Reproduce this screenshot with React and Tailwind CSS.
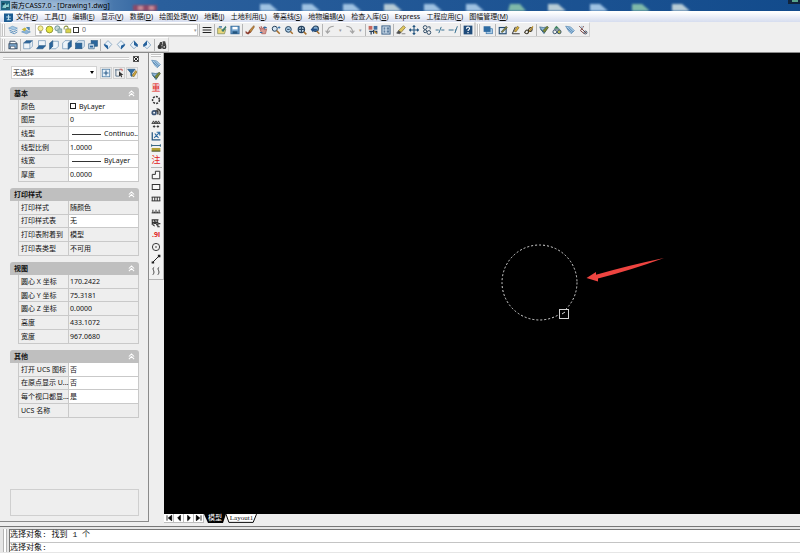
import React from "react";

const B = "#2f6ca3";
const D = "#26435f";

const ICONS = {
  layers: (
    <>
      <path d="M1 5l6-3 8 3-5 3z" fill="#a9cbe6" stroke="#5b8fbd" />
      <path d="M2 8l7 3 6-3M3 11l7 3 5-3" fill="none" stroke="#5b8fbd" strokeWidth="1.5" />
    </>
  ),
  layersPrev: (
    <>
      <path d="M1 11l6-3 8 3-6 3z" fill="#8fb6d8" stroke="#5b8fbd" />
      <path d="M1 7l5-3 3 2-3 4z" fill="#c9b93a" />
      <path d="M8 3h6v6l-3-2z" fill="#4f86b5" />
    </>
  ),
  lines: <path d="M1 4h14M1 8h14M1 12h14" stroke="#222" strokeWidth="1.7" />,
  folder: (
    <>
      <path d="M1 5h5l1 2h7l-2 7H1z" fill="#e9d77c" stroke="#6b7a4a" />
      <path d="M7 9l7-8 1 3-5 7z" fill="#3d7d6e" />
      <path d="M3 3h5" stroke={B} strokeWidth="2" />
    </>
  ),
  save: (
    <>
      <rect x="1.5" y="2" width="13" height="12" fill="#6fa0cc" stroke="#336a9d" strokeWidth="1.5" />
      <rect x="4" y="3" width="8" height="4" fill="#fff" />
      <rect x="4" y="10" width="8" height="4" fill="#24557f" />
    </>
  ),
  brush: (
    <>
      <path d="M6 10L14 1l1 2-6 9z" fill="#c58a3c" stroke="#7d4d20" />
      <path d="M1 9l3 3 4-3 1 3-4 3-4-2z" fill="#8c3d2f" />
    </>
  ),
  hand: (
    <>
      <path d="M2 3l3 4V2l3 5 1-4 2 5 3-2-2 8H6z" fill="#d79b93" stroke="#a34b45" />
      <path d="M11 2v5M9 4h5M3 12h4" stroke={B} strokeWidth="1.6" />
    </>
  ),
  zoomRt: (
    <>
      <circle cx="6" cy="6" r="4" fill="#d5e6f3" stroke={D} strokeWidth="1.6" />
      <path d="M9 9l5 5" stroke="#a8702d" strokeWidth="2.4" />
      <path d="M11 4h4M13 2v4" stroke={B} strokeWidth="1.4" />
    </>
  ),
  zoomWin: (
    <>
      <circle cx="7" cy="7" r="4.6" fill="#a9cbe6" stroke={D} strokeWidth="1.6" />
      <path d="M10 10l4 4" stroke="#a8702d" strokeWidth="2.4" />
      <path d="M5 7h4" stroke={D} strokeWidth="1.6" />
    </>
  ),
  zoomExt: (
    <>
      <circle cx="7" cy="7" r="5" fill="#c7dced" stroke={D} strokeWidth="2" />
      <path d="M7 3v8M3 7h8" stroke={D} strokeWidth="1.8" />
      <path d="M11 11l4 4" stroke="#a8702d" strokeWidth="2.4" />
    </>
  ),
  zoomPrev: (
    <>
      <circle cx="9" cy="6" r="4.4" fill="#7ea9cf" stroke={D} strokeWidth="1.8" />
      <path d="M1 7l4-4v3h6v3H5v3z" fill="#224e86" />
      <path d="M11 10l4 4" stroke="#a8702d" strokeWidth="2.4" />
    </>
  ),
  undo: <path d="M14 2C7 2 4 6 4 12M1 9l3 4 4-4" fill="none" stroke="#a4a4a4" strokeWidth="1.8" />,
  redo: <path d="M2 2c7 0 10 4 10 10M8 9l4 4 3-4" fill="none" stroke="#a4a4a4" strokeWidth="1.8" />,
  props: (
    <>
      <rect x="1" y="1.5" width="6" height="6" fill="#c6675e" />
      <rect x="9" y="1.5" width="6" height="6" fill="#3f6e9e" />
      <path d="M2 10h12v4M5 10v5M9 8v6" stroke="#27405c" strokeWidth="2" fill="none" />
      <path d="M10 10l4 4" stroke="#ca8e2a" strokeWidth="2" />
    </>
  ),
  palette: (
    <>
      <rect x="1.5" y="1.5" width="13" height="13" fill="#dce9f4" stroke="#365c83" strokeWidth="1.6" />
      <path d="M4 5h3M9 5h4M4 8h3M9 8h4M4 11h3M9 11h4" stroke="#365c83" strokeWidth="1.8" />
    </>
  ),
  erase: (
    <>
      <path d="M4 9l8-8 3 3-7 8z" fill="#dec65f" stroke="#75622a" />
      <path d="M1 13l3-4 4 3-2 2zM9 14h6" fill="#4c4c4c" stroke="#4c4c4c" />
    </>
  ),
  move: (
    <path
      d="M8 1v14M1 8h14M6 3l2-2 2 2M6 13l2 2 2-2M3 6L1 8l2 2M13 6l2 2-2 2"
      fill="none"
      stroke="#24557f"
      strokeWidth="1.7"
    />
  ),
  copy: (
    <>
      <circle cx="5" cy="4" r="3" fill="none" stroke={D} strokeWidth="1.5" />
      <circle cx="5" cy="10" r="2.4" fill="none" stroke={D} strokeWidth="1.5" />
      <circle cx="11" cy="12" r="3" fill="none" stroke={D} strokeWidth="1.5" />
      <path d="M9 3h4v4" fill="none" stroke={D} strokeWidth="1.4" />
    </>
  ),
  trim: <path d="M1 8h5M10 8h5M6 13l4-10" stroke="#3a7393" strokeWidth="1.6" />,
  extend: <path d="M1 8h8M11 8h2M11 13l4-11" stroke="#3a7393" strokeWidth="1.6" />,
  help: (
    <>
      <rect x="1" y="1" width="14" height="14" fill="#1f4b7a" />
      <path d="M5.5 6c0-3.500 5-3.500 5-.5 0 2-2.500 2-2.500 4M8 11v2" fill="none" stroke="#fff" strokeWidth="1.8" />
    </>
  ),
  order: (
    <>
      <rect x="5" y="6" width="10" height="8" fill="#a9cbe6" stroke="#2f6ca3" />
      <rect x="1" y="2" width="11" height="9" fill="#2f6ca3" />
    </>
  ),
  boxPen: (
    <>
      <rect x="2" y="4" width="11" height="10" fill="#dce9f4" stroke="#234b70" strokeWidth="1.8" />
      <path d="M5 11l8-9 2 2-8 8z" fill="#8a8440" stroke="#353d2a" strokeWidth=".8" />
    </>
  ),
  anglePen: (
    <>
      <path d="M7 3L2 14h12" fill="none" stroke="#333" strokeWidth="1.6" />
      <path d="M5 10l5-8 3 2-5 7z" fill="#d7ae37" stroke="#75622a" />
    </>
  ),
  chainPen: (
    <>
      <path d="M1 12c2-5 5-5 6-2s-3 6-6 2zM7 8c2-5 6-5 6-1s-5 4-6 1z" fill="none" stroke="#3b3524" strokeWidth="1.8" />
      <path d="M8 9l6-8 1 2-6 8z" fill="#b98d2a" />
    </>
  ),
  layerPen: (
    <>
      <path d="M1 3l6 1 7-1-6 11z" fill="#8fb6d8" stroke="#2d5f7d" />
      <path d="M6 9l7-7 2 2-6 8z" fill="#7f8c36" stroke="#3d4a2c" />
      <path d="M2 6l5 6" stroke="#2d5f7d" strokeWidth="1.500" />
    </>
  ),
  treePen: (
    <>
      <path d="M7 1l5 5H3z" fill="#3c8261" />
      <circle cx="4.500" cy="11" r="3" fill="none" stroke="#35506b" strokeWidth="1.500" />
      <circle cx="11.500" cy="11" r="3" fill="#b8b84f" stroke="#35506b" strokeWidth="1.500" />
      <path d="M3 7h10" stroke="#35506b" />
    </>
  ),
  sheet: (
    <>
      <path d="M1 2l8 1 6 6-5 5-4-4z" fill="#a9cbe6" stroke="#4a7dab" />
      <path d="M3 5l8 7M6 4l7 7" stroke="#4a7dab" strokeWidth="1.300" />
    </>
  ),
  cutPen: (
    <>
      <path d="M2 2l11 11M4 9l6 5M9 2L4 9" stroke="#7c4643" strokeWidth="1.600" />
      <circle cx="12" cy="12" r="2.300" fill="none" stroke="#31445a" strokeWidth="1.500" />
      <circle cx="6" cy="3" r="2" fill="#b9c7d5" />
    </>
  ),
  printer: (
    <>
      <path d="M3 6V2h8l2 2v3" fill="#fff" stroke="#31445a" strokeWidth="1.400" />
      <rect x="1.500" y="6" width="13" height="8" fill="#7ea9cf" stroke="#31445a" strokeWidth="1.400" />
      <path d="M4 10h7v4H4z" fill="#fff" stroke="#31445a" />
    </>
  ),
  cubeTop: (
    <>
      <path d="M1 5l4-4h10l-4 4z" fill="#2a659d" stroke="#24557f" />
      <path d="M1 5h10v9H1zM11 5l4-4v9l-4 4" fill="#eef4f9" stroke="#5d87ad" />
    </>
  ),
  cubeBottom: (
    <>
      <path d="M4 1h11v9H4z" fill="#eef4f9" stroke="#5d87ad" />
      <path d="M1 14l4-5h10l-4 5z" fill="#2a659d" stroke="#24557f" />
    </>
  ),
  cubeLeft: (
    <>
      <path d="M5 2h10v8l-4 4H1" fill="#eef4f9" stroke="#5d87ad" />
      <path d="M1 5l5-4v9l-5 5z" fill="#2a659d" stroke="#24557f" />
    </>
  ),
  cubeRight: (
    <>
      <path d="M1 5l4-4h10L10 5v9H1z" fill="#eef4f9" stroke="#5d87ad" />
      <path d="M10 5l5-4v9l-5 5z" fill="#2a659d" stroke="#24557f" />
    </>
  ),
  cubeFront: (
    <>
      <path d="M1 5l4-4h10v9l-4 4" fill="#dbe8f3" stroke="#5d87ad" />
      <rect x="1" y="5" width="10" height="9" fill="#2a659d" stroke="#24557f" />
    </>
  ),
  cubeBack: (
    <>
      <rect x="5" y="1" width="10" height="9" fill="#2a659d" stroke="#24557f" />
      <path d="M1 6h9v8H1z" fill="#cfe0ef" stroke="#24557f" />
      <path d="M3 9h5v3H3z" fill="#2a659d" />
    </>
  ),
  isoSW: (
    <>
      <path d="M8 1l6 6-6 7-6-7z" fill="#e8f1f8" stroke="#5d87ad" />
      <path d="M2 6l6 3v6L2 9z" fill="#24609b" />
    </>
  ),
  isoSE: (
    <>
      <path d="M8 1l6 6-6 7-6-7z" fill="#e8f1f8" stroke="#5d87ad" />
      <path d="M14 6L8 9v6l6-6z" fill="#24609b" />
    </>
  ),
  isoNE: (
    <>
      <path d="M8 1l6 7-6 6-6-6z" fill="#e8f1f8" stroke="#5d87ad" />
      <path d="M8 1l6 6v4L8 8z" fill="#24609b" />
    </>
  ),
  isoNW: (
    <>
      <path d="M8 1l6 7-6 6-6-6z" fill="#e8f1f8" stroke="#5d87ad" />
      <path d="M8 1L2 7v4l6-3z" fill="#24609b" />
    </>
  ),
  camera: (
    <>
      <circle cx="4.500" cy="11" r="3.500" fill="#333" />
      <circle cx="11.500" cy="11" r="3.500" fill="#333" />
      <path d="M3 8l2-5h3v4h1V2h4l2 7" fill="#444" />
      <circle cx="11.500" cy="11" r="1.300" fill="#ddd" />
    </>
  ),
  ring: <circle cx="8" cy="8" r="5.500" fill="none" stroke="#333" strokeWidth="2.400" strokeDasharray="3.200 1.800" />,
  eye: (
    <>
      <circle cx="5" cy="9" r="4.300" fill="#3d5678" />
      <path d="M9 3c5 0 7 4 5 10M7 6h4v6" fill="none" stroke="#222" strokeWidth="2" />
      <circle cx="5" cy="9" r="1.500" fill="#fff" />
    </>
  ),
  trees: <path d="M2 7l2-4 2 4M6 7l2-4 2 4M10 7l2-4 2 4M1 7h14M5 10v4M11 10v4M3 12h4M9 12h4" fill="none" stroke="#333" strokeWidth="1.500" />,
  survey: (
    <>
      <path d="M2 2v12h13" fill="none" stroke="#24557f" strokeWidth="2" />
      <path d="M5 11l8-8M6 4l6 7M9 2h5v5" fill="none" stroke="#2f6ca3" strokeWidth="1.800" />
    </>
  ),
  ruler: (
    <>
      <path d="M1 4h14M1 2v4M15 2v4" stroke="#2d5f7d" strokeWidth="1.500" />
      <rect x="1" y="8" width="14" height="5" fill="#b3a136" />
      <path d="M1 13h14" stroke="#38421e" strokeWidth="1.500" />
    </>
  ),
  lshape: <path d="M2 14V7h5V2h7v12z" fill="#f7f7f7" stroke="#333" strokeWidth="1.600" />,
  rect: <rect x="2" y="4" width="12" height="8" fill="#f7f7f7" stroke="#333" strokeWidth="1.600" />,
  fence: <path d="M1 5h14M1 11h14M2 5v6M6 5v6M10 5v6M14 5v6" stroke="#333" strokeWidth="1.600" />,
  slope: <path d="M1 11h14M3 6v5M8 6v5M13 6v5M5.500 9v2M10.500 9v2" stroke="#333" strokeWidth="1.600" />,
  hatch: <path d="M1 3h11M2 7h9M2 3v7l9-3v7h3M5 3l5 9M10 3v5M3 11l3 2M12 9h3" fill="none" stroke="#333" strokeWidth="1.700" />,
  target: (
    <>
      <circle cx="8" cy="8" r="5.800" fill="none" stroke="#333" strokeWidth="1.500" />
      <circle cx="8" cy="8" r="1.300" fill="#333" />
    </>
  ),
  segment: (
    <>
      <path d="M2 14L14 2" stroke="#222" strokeWidth="1.600" />
      <path d="M1 12h4v3H1zM11 1h4v4h-4z" fill="#222" />
    </>
  ),
  waves: <path d="M5 2c-5 3 3 6-2 12M13 2c-5 3 3 6-2 12" fill="none" stroke="#333" strokeWidth="1.500" />,
  bulb: (
    <>
      <circle cx="8" cy="6" r="4.500" fill="#f6ef9a" stroke="#a49b3e" strokeWidth="1.300" />
      <path d="M6 11h4v4H6z" fill="#8b8b8b" />
    </>
  ),
  sun: <circle cx="8" cy="8" r="6" fill="#e6e43c" stroke="#8c9332" strokeWidth="1.600" />,
  freeze: (
    <>
      <circle cx="6" cy="6" r="4.500" fill="#c9d9d9" stroke="#5f8b8d" strokeWidth="1.500" />
      <rect x="7" y="7" width="7" height="7" fill="#a8c3c3" stroke="#5f8b8d" />
    </>
  ),
  lock: (
    <>
      <path d="M2 8V5c0-4 7-4 7 0v3" fill="none" stroke="#8b9440" strokeWidth="1.800" />
      <rect x="5" y="7" width="9" height="7" fill="#d8d24d" stroke="#7d8440" />
    </>
  ),
  pickAdd: (
    <>
      <rect x="2" y="2" width="12" height="12" fill="#e8f1f8" stroke="#4f7fa8" strokeWidth="1.300" />
      <path d="M8 4v8M4 8h8" stroke="#2d5f8d" strokeWidth="1.800" />
    </>
  ),
  pickCursor: (
    <>
      <path d="M2 3h8M3 2v11h5" fill="none" stroke="#59728a" strokeWidth="1.500" />
      <path d="M8 5v9l2-2 2 3 1-1-1-3h3z" fill="#333" />
      <path d="M9 2h4v3" fill="none" stroke="#c0504d" strokeWidth="1.500" />
    </>
  ),
  filter: (
    <>
      <path d="M1 2h12L8 8v6l-2-2V8z" fill="#2f6ca3" stroke="#24557f" />
      <path d="M8 12l6-8 2 2-5 8z" fill="#d3a83a" stroke="#75622a" />
    </>
  ),
};

function Icon({ name, className = "size-[10px]" }) {
  return (
    <svg viewBox="0 0 16 16" className={`shrink-0 ${className}`} aria-hidden="true">
      {ICONS[name]}
    </svg>
  );
}

function Tool({ name }) {
  return (
    <button type="button" aria-label={name} className="flex size-3 shrink-0 items-center justify-center">
      <Icon name={name} />
    </button>
  );
}

function Group({ names }) {
  return (
    <div className="flex items-center gap-px">
      {names.map((n) => (
        <Tool key={n} name={n} />
      ))}
    </div>
  );
}

const Sep = () => <span className="mx-px h-3 w-px shrink-0 bg-[#b5b5b5]" />;
const Grip = () => <span className="mr-[2px] h-3 w-[3px] shrink-0 border-x border-[#c4c4c4] bg-white" />;
const Caret = () => <span className="w-2 shrink-0 text-center text-[5px] leading-3 text-[#999]">▾</span>;

const MENUS = [
  ["文件", "F"], ["工具", "T"], ["编辑", "E"], ["显示", "V"], ["数据", "D"], ["绘图处理", "W"], ["地籍", "J"],
  ["土地利用", "L"], ["等高线", "S"], ["地物编辑", "A"], ["检查入库", "G"], ["Express", ""], ["工程应用", "C"], ["图幅管理", "M"],
];

const Swatch = () => <span className="mr-[3px] inline-block size-[6px] border border-[#222] bg-white" />;
const Stroke = () => <span className="mr-[3px] ml-[2px] inline-block h-px w-[29px] bg-[#333] align-middle" />;

const SECTIONS = [
  {
    title: "基本",
    height: "h-[82px]",
    rows: [
      ["颜色", <><Swatch />ByLayer</>, true],
      ["图层", "0", true],
      ["线型", <><Stroke />Continuo...</>, true],
      ["线型比例", "1.0000", true],
      ["线宽", <><Stroke />ByLayer</>, true],
      ["厚度", "0.0000", true],
    ],
  },
  {
    title: "打印样式",
    height: "h-[55px]",
    rows: [
      ["打印样式", "随颜色", false],
      ["打印样式表", "无", true],
      ["打印表附着到", "模型", false],
      ["打印表类型", "不可用", false],
    ],
  },
  {
    title: "视图",
    height: "h-[69px]",
    rows: [
      ["圆心 X 坐标", "170.2422", false],
      ["圆心 Y 坐标", "75.3181", false],
      ["圆心 Z 坐标", "0.0000", false],
      ["高度", "433.1072", false],
      ["宽度", "967.0680", false],
    ],
  },
  {
    title: "其他",
    height: "h-[55px]",
    rows: [
      ["打开 UCS 图标", "否", true],
      ["在原点显示 U...", "否", true],
      ["每个视口都显...", "是", true],
      ["UCS 名称", "", false],
    ],
  },
];

function Section({ title, rows, height }) {
  return (
    <section className="mb-[6px]">
      <h2 className="flex h-[13px] items-center justify-between rounded-t-[3px] bg-[#bfbfbf] pr-1 pl-1 font-bold">
        {title}
        <button type="button" aria-label={`折叠 ${title}`}>
          <svg viewBox="0 0 8 8" className="size-[7px]">
            <path d="M1 4l3-3 3 3M1 7l3-3 3 3" fill="none" stroke="#fff" strokeWidth="1.2" />
          </svg>
        </button>
      </h2>
      <div className="pl-2">
        <table className={`w-full table-fixed border-collapse ${height}`}>
          <tbody>
            {rows.map(([label, value, editable]) => (
              <tr key={label}>
                <th scope="row" className="w-[50px] border border-t-0 border-[#c9c9c9] p-0 pl-[2px] text-left font-normal whitespace-nowrap">
                  {label}
                </th>
                <td className={`overflow-hidden border border-t-0 border-[#c9c9c9] p-0 pl-px whitespace-nowrap ${editable ? "bg-white" : ""}`}>
                  {value}
                </td>
              </tr>
            ))}
          </tbody>
        </table>
      </div>
    </section>
  );
}

function TitleBar() {
  return (
    <header className="relative flex h-[11px] shrink-0 items-center overflow-hidden bg-linear-to-r from-[#8fb3d3] via-[#2a5f9c] via-20% to-[#124b8c] pl-px">
      <svg className="absolute inset-0 h-full w-full" viewBox="0 0 800 11" preserveAspectRatio="none" aria-hidden="true">
        <defs>
          <filter id="soft" x="-20%" y="-50%" width="140%" height="200%">
            <feGaussianBlur stdDeviation="1.2" />
          </filter>
          <filter id="glow" x="-20%" y="-100%" width="140%" height="300%">
            <feGaussianBlur stdDeviation="5" />
          </filter>
        </defs>
        <rect x="6" y="1" width="98" height="10" fill="#c4d6e6" opacity=".75" filter="url(#glow)" />
        <g filter="url(#soft)">
          <path d="M133 5h24v6h-24z" fill="#8d4a68" />
          <path d="M138 6h5v4h-5zM149 6h5v4h-5z" fill="#c88a98" />
          {[260, 302, 343, 424, 466, 590].map((x) => (
            <path key={x} d={`M${x} 4h10l8 7h-18z`} fill="#9fc2e2" />
          ))}
          <path d="M384 4h10l8 7h-18zM548 4h10l8 7h-18zM672 4h10l8 7h-18z" fill="#b7ccd6" />
          <path d="M510 4h10l6 7h-18zM632 4h10l8 7h-18z" fill="#7fb9a9" />
        </g>
        <path d="M788 0h12v4h-12z" fill="#10243d" />
        <path d="M792 0h6v2h-6z" fill="#58a58c" />
      </svg>
      <svg viewBox="0 0 16 16" className="relative size-[9px]" aria-hidden="true">
        <path d="M0 0h16v16H0z" fill="#1f6884" />
        <path d="M2 12l5-9 3 5 4-4v9z" fill="#8fd0d2" />
        <path d="M2 5h5M9 12h5" stroke="#0b2f45" strokeWidth="2" />
      </svg>
      <h1 className="relative ml-px text-[7px] leading-[11px] whitespace-nowrap text-black">南方CASS7.0 - [Drawing1.dwg]</h1>
    </header>
  );
}

function MenuBar() {
  return (
    <nav className="flex h-[11px] shrink-0 items-center gap-[3px] border-t border-white bg-linear-to-b from-white to-[#d6ddef] pl-1 leading-[10px]">
      <svg viewBox="0 0 16 16" className="size-[9px] shrink-0" aria-hidden="true">
        <path d="M0 1h16v12l-3 3H0z" fill="#1d5c92" />
        <path d="M8 3v9M4 7h8M5 12h7" stroke="#bfe0ee" strokeWidth="2" />
      </svg>
      <div className="flex w-[492px] justify-between">
        {MENUS.map(([label, key]) => (
          <button key={label} type="button" className="shrink-0 whitespace-nowrap">
            {label}
            {key && <>(<u>{key}</u>)</>}
          </button>
        ))}
      </div>
    </nav>
  );
}

function Bar({ children }) {
  return <div className="flex h-[15px] items-center border border-[#d0d0d0] border-t-white pl-px">{children}</div>;
}

function Toolbars() {
  return (
    <div className="flex h-[31px] shrink-0 flex-col items-start border-b border-[#8a8a8a] bg-[#efefef]">
      <div className="flex">
        <Bar>
          <Grip />
          <Group names={["layers", "layersPrev"]} />
          <div className="relative ml-[3px] flex items-center">
            <select aria-label="图层" className="h-3 w-[163px] appearance-none border border-[#c4c4c4] bg-white pl-[46px] text-[7px] leading-[10px] text-[#666]">
              <option>0</option>
            </select>
            <div className="pointer-events-none absolute left-px flex items-center">
              <Icon name="bulb" className="size-[9px]" />
              <Icon name="sun" className="size-[9px]" />
              <Icon name="freeze" className="size-[9px]" />
              <Icon name="lock" className="size-[9px]" />
              <span className="ml-px size-[6px] border border-[#333] bg-white" />
            </div>
            <span className="pointer-events-none absolute right-px">
              <Caret />
            </span>
          </div>
          <Sep />
          <Group names={["lines"]} />
          <Sep />
          <Group names={["folder", "save"]} />
          <Sep />
          <Group names={["brush", "hand", "zoomRt", "zoomWin", "zoomExt", "zoomPrev"]} />
          <Sep />
          <Tool name="undo" />
          <Caret />
          <Tool name="redo" />
          <Caret />
          <Sep />
          <Group names={["props", "palette"]} />
          <Sep />
          <Group names={["erase", "move", "copy", "trim", "extend"]} />
          <Sep />
          <Group names={["help"]} />
        </Bar>
        <Bar>
          <Grip />
          <Group names={["order"]} />
          <Sep />
          <Group names={["boxPen", "anglePen", "chainPen"]} />
          <Sep />
          <Group names={["layerPen", "treePen", "sheet", "cutPen"]} />
        </Bar>
      </div>
      <Bar>
        <Grip />
        <Group names={["printer"]} />
        <Sep />
        <Group names={["cubeTop", "cubeBottom", "cubeLeft", "cubeRight", "cubeFront", "cubeBack"]} />
        <Sep />
        <Group names={["isoSW", "isoSE", "isoNE", "isoNW"]} />
        <Sep />
        <Group names={["camera"]} />
      </Bar>
    </div>
  );
}

function PropertiesPanel() {
  return (
    <aside className="mb-1 flex w-[149px] shrink-0 flex-col border-r border-b border-[#8a8a8a] bg-[#eeeeee] pr-[9px]">
      <div className="flex h-[11px] items-center gap-1 pl-[3px]">
        <span className="h-[3px] flex-1 border-y border-[#cccccc] bg-white" />
        <button type="button" aria-label="关闭" className="flex size-[6px] items-center justify-center border border-[#555]">
          <svg viewBox="0 0 6 6" className="size-[4px]">
            <path d="M0 0l6 6M6 0L0 6" stroke="#222" strokeWidth="1.5" />
          </svg>
        </button>
      </div>
      <div className="mt-[2px] mb-[8px] flex items-center pl-[11px]">
        <div className="relative flex items-center">
          <select aria-label="选择" className="h-[13px] w-[86px] appearance-none border border-[#d2d2d2] bg-white pl-px text-[7px] leading-[11px]">
            <option>无选择</option>
          </select>
          <span className="pointer-events-none absolute right-[3px] border-x-[2px] border-t-[3px] border-x-transparent border-t-black" />
        </div>
        <div className="ml-[3px] flex gap-px">
          {["pickAdd", "pickCursor", "filter"].map((n) => (
            <button key={n} type="button" aria-label={n} className="border border-[#d0d0d0]">
              <Icon name={n} />
            </button>
          ))}
        </div>
      </div>
      <div className="pl-[10px]">
        {SECTIONS.map((s) => (
          <Section key={s.title} {...s} />
        ))}
      </div>
      <div className="mt-auto mb-[5px] ml-[10px] h-[27px] border border-[#cfcfcf]" />
    </aside>
  );
}

function VTool({ name, children }) {
  return (
    <button type="button" aria-label={name} className="flex h-3 w-full shrink-0 items-center justify-center leading-3 text-[#e02020]">
      {children || <Icon name={name} />}
    </button>
  );
}

function SideToolbar() {
  return (
    <div className="flex w-[15px] shrink-0 flex-col">
      <div className="flex flex-col items-center border-r border-b border-[#b5b5b5] bg-[#f2f2f2] pb-[2px]">
        <span className="my-px h-[3px] w-[10px] border-y border-[#c4c4c4] bg-white" />
        <VTool name="sheet" />
        <VTool name="layerPen" />
        <VTool name="重"><span className="text-[9px]">重</span></VTool>
        <VTool name="ring" />
        <VTool name="eye" />
        <VTool name="trees" />
        <VTool name="survey" />
        <VTool name="ruler" />
        <VTool name="注"><span className="text-[9px]">注</span></VTool>
        <span className="my-px h-px w-[11px] bg-[#b5b5b5]" />
        <VTool name="lshape" />
        <VTool name="rect" />
        <VTool name="fence" />
        <VTool name="slope" />
        <VTool name="hatch" />
        <VTool name=".91"><span className="text-[7px] font-bold">.9l</span></VTool>
        <VTool name="target" />
        <VTool name="segment" />
        <VTool name="waves" />
      </div>
    </div>
  );
}

function Canvas() {
  return (
    <div className="min-h-0 flex-1 overflow-hidden bg-black">
      <svg width="636" height="461" viewBox="0 0 636 461" role="img" aria-label="Drawing1">
        <circle cx="375.5" cy="229.5" r="37.5" fill="none" stroke="#d8d8d8" strokeWidth="1" strokeDasharray="2 2" />
        <rect x="395.5" y="256.5" width="9" height="9" fill="#000" stroke="#d0d0d0" />
        <path d="M398 261l3-2" stroke="#d8d8d8" />
        <path d="M422.5 225L432 219l0 2.800Q462 213 500 205Q466 217.500 434 225.500L434 228.500z" fill="#ee4440" />
      </svg>
    </div>
  );
}

function LayoutTabs() {
  const arrows = [
    ["首个", "M3 2v8M10 2L5 6l5 4z"],
    ["上一个", "M8 2L4 6l4 4z"],
    ["下一个", "M4 2l4 4-4 4z"],
    ["末个", "M9 2v8M2 2l5 4-5 4z"],
  ];
  return (
    <div className="flex h-3 shrink-0 items-start bg-[#eeeeee] font-['Liberation_Serif','Noto_Sans_CJK_SC',serif] text-[7px]">
      <div className="flex">
        {arrows.map(([label, d]) => (
          <button key={label} type="button" aria-label={label} className="flex h-[9px] w-[10px] items-center justify-center border-r border-b border-[#bdbdbd] bg-white">
            <svg viewBox="0 0 12 12" className="size-2">
              <path d={d} fill="#000" stroke="#000" strokeWidth="1.200" />
            </svg>
          </button>
        ))}
      </div>
      <button type="button" className="relative flex h-[9px] w-[22px] items-center justify-center text-white">
        <svg viewBox="0 0 22 9" className="absolute inset-0 h-full w-full" aria-hidden="true">
          <path d="M0 0h22l-3 9H4z" fill="#000" />
        </svg>
        <span className="relative leading-[9px]">模型</span>
      </button>
      <button type="button" className="relative flex h-[9px] w-[31px] items-center justify-center">
        <svg viewBox="0 0 32 9" className="absolute inset-0 h-full w-full" aria-hidden="true">
          <path d="M0 0l3 8.500h25L31.500 0" fill="#fff" stroke="#000" />
        </svg>
        <span className="relative leading-[9px]">Layout1</span>
      </button>
    </div>
  );
}

function CommandLine() {
  return (
    <footer className="flex h-[27px] shrink-0 border-t border-[#777] bg-[#e6e6e6] pt-[2px] pb-px pl-[3px] font-['Liberation_Mono','Noto_Sans_CJK_SC',monospace] text-[8px]">
      <span className="mr-[2px] w-[4px] border-x border-[#b5b5b5] bg-white" />
      <div className="flex min-w-0 flex-1 flex-col border-t border-l border-[#777] bg-white">
        <p className="h-[13px] border-b border-[#c4c4c4] leading-[9px]">选择对象: 找到 1 个</p>
        <label className="flex h-[9px] items-center leading-[9px]">
          <span className="whitespace-nowrap">选择对象:</span>
          <input type="text" className="h-[9px] min-w-0 flex-1 bg-transparent pl-1 outline-none" />
        </label>
      </div>
    </footer>
  );
}

export default function App() {
  return (
    <div className="flex h-screen flex-col overflow-hidden bg-[#eeeeee] font-['Noto_Sans','Noto_Sans_CJK_SC',sans-serif] text-[7px] leading-[9px] text-[#111]">
      <TitleBar />
      <MenuBar />
      <Toolbars />
      <div className="flex min-h-0 flex-1">
        <PropertiesPanel />
        <SideToolbar />
        <main className="flex min-w-0 flex-1 flex-col">
          <Canvas />
          <LayoutTabs />
        </main>
      </div>
      <CommandLine />
    </div>
  );
}
